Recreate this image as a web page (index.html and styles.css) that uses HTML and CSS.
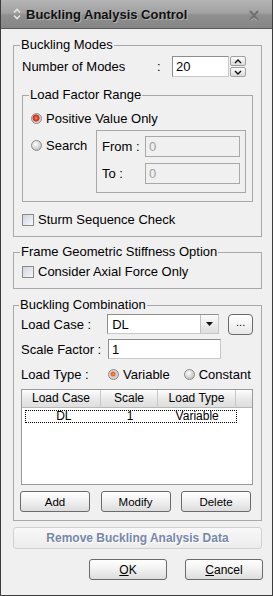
FILE: index.html
```html
<!DOCTYPE html>
<html lang="en">
<head>
  <meta charset="UTF-8" />
  <title>Buckling Analysis Control</title>
  <link rel="stylesheet" href="styles.css">
</head>
<body>
  <div class="window">
    <div class="titlebar">
      <svg class="title-icon" width="10" height="12" viewBox="0 0 10 12">
        <path d="M2 4.5 L5 1.5 L8 4.5 M2 7.5 L5 10.5 L8 7.5" fill="none" stroke="#e4e4e4" stroke-width="1.6"/>
      </svg>
      <span class="title-text">Buckling Analysis Control</span>
      <svg class="close-icon" width="12" height="11" viewBox="0 0 12 11">
        <path d="M2 1 L10 10 M10 1 L2 10" stroke="#707070" stroke-width="2"/>
        <path d="M3 10.5 L5 8.5 M9 10.5 L7 8.5" stroke="#c8c8c8" stroke-width="1"/>
      </svg>
    </div>

    <div class="content">
      <fieldset class="group group-modes">
        <legend>Buckling Modes</legend>
        <div class="row modes-row">
          <span class="label-modes">Number of Modes</span>
          <span class="colon">:</span>
          <input class="field field-modes" type="text" value="20">
          <div class="spinner">
            <div class="spin-btn">
              <svg width="8" height="5" viewBox="0 0 8 5"><path d="M1 4 L4 1 L7 4" fill="none" stroke="#111" stroke-width="1.4"/></svg>
            </div>
            <div class="spin-btn">
              <svg width="8" height="5" viewBox="0 0 8 5"><path d="M1 1 L4 4 L7 1" fill="none" stroke="#111" stroke-width="1.4"/></svg>
            </div>
          </div>
        </div>

        <fieldset class="group group-range">
          <legend>Load Factor Range</legend>
          <div class="radio-row positive-row">
            <span class="radio checked"></span>
            <span>Positive Value Only</span>
          </div>
          <div class="search-row">
            <div class="radio-row search-label">
              <span class="radio"></span>
              <span>Search</span>
            </div>
            <div class="range-box">
              <div class="range-line">
                <span class="range-label">From :</span>
                <input class="field field-range" type="text" value="0" disabled>
              </div>
              <div class="range-line">
                <span class="range-label">To :</span>
                <input class="field field-range" type="text" value="0" disabled>
              </div>
            </div>
          </div>
        </fieldset>

        <div class="check-row sturm-row">
          <span class="checkbox"></span>
          <span>Sturm Sequence Check</span>
        </div>
      </fieldset>

      <fieldset class="group group-frame">
        <legend>Frame Geometric Stiffness Option</legend>
        <div class="check-row axial-row">
          <span class="checkbox"></span>
          <span>Consider Axial Force Only</span>
        </div>
      </fieldset>

      <fieldset class="group group-combo">
        <legend>Buckling Combination</legend>
        <div class="row form-row">
          <span class="form-label">Load Case :</span>
          <div class="combo">
            <span class="combo-value">DL</span>
            <span class="combo-btn">
              <svg width="7" height="4" viewBox="0 0 7 4"><path d="M0 0 H7 L3.5 4 Z" fill="#111"/></svg>
            </span>
          </div>
          <button class="dots-btn">...</button>
        </div>
        <div class="row form-row scale-row">
          <span class="form-label">Scale Factor :</span>
          <input class="field field-scale" type="text" value="1">
        </div>
        <div class="row type-row">
          <span class="form-label">Load Type :</span>
          <div class="radio-row">
            <span class="radio checked small-dot"></span>
            <span>Variable</span>
          </div>
          <div class="radio-row constant">
            <span class="radio"></span>
            <span>Constant</span>
          </div>
        </div>

        <div class="list">
          <div class="list-head">
            <span class="col col-case">Load Case</span>
            <span class="col col-scale">Scale</span>
            <span class="col col-type">Load Type</span>
            <span class="col col-rest"></span>
          </div>
          <div class="list-row">
            <span class="col col-case">DL</span>
            <span class="col col-scale">1</span>
            <span class="col col-type">Variable</span>
          </div>
        </div>

        <div class="list-buttons">
          <button class="btn">Add</button>
          <button class="btn">Modify</button>
          <button class="btn">Delete</button>
        </div>
      </fieldset>

      <button class="remove-btn">Remove Buckling Analysis Data</button>

      <div class="dialog-buttons">
        <button class="btn btn-wide"><u>O</u>K</button>
        <button class="btn btn-wide"><u>C</u>ancel</button>
      </div>
    </div>
  </div>
</body>
</html>
```

FILE: styles.css
```css
* { box-sizing: border-box; }
body { margin: 0; padding: 0; background: #f0f0f0; font-family: "Liberation Sans", Arial, sans-serif; font-size: 13px; color: #000; }

.window { width: 273px; height: 596px; border: 1px solid #3c3c3c; border-top: none; background: #f0f0f0; overflow: hidden; }

.titlebar { height: 29px; display: flex; align-items: center; padding: 0 12px 0 11px; background: linear-gradient(#b4b4b4, #a2a2a2 45%, #8e8e8e 55%, #868686); border-bottom: 1px solid #5a5a5a; margin: 0 -1px; border-left: 1px solid #3c3c3c; border-right: 1px solid #3c3c3c; }
.title-icon { margin-right: 4px; }
.title-text { font-weight: bold; font-size: 13px; color: #111; text-shadow: 1px 1px 0 rgba(255,255,255,0.35); flex: 1; }
.close-icon { margin-top: 2px; }

.content { padding: 0 10px 0 12px; }

.group { margin: 0; border: 1px solid #a8a8a8; padding: 0 8px 0 8px; min-width: 0; }
.group legend { padding: 0 1px; margin-left: -2px; line-height: 14px; height: 14px; }

.row { display: flex; align-items: center; }

.field { font-family: "Liberation Sans", Arial, sans-serif; font-size: 13px; border: 1px solid #7f9db9; border-color: #8e8e8e #c8c8c8 #c8c8c8 #8e8e8e; background: #fff; padding: 0 3px; height: 21px; outline: none; color: #000; }
.field:disabled { background: #f0f0f0; color: #a0a0a0; border-color: #a8a8a8; }

/* Buckling Modes */
.group-modes { margin-top: 9px; padding-bottom: 10px; }
.modes-row { margin-top: 4px; height: 21px; }
.label-modes { width: 135px; }
.colon { width: 15px; }
.field-modes { width: 57px; }
.spinner { display: flex; flex-direction: column; gap: 1px; margin-left: 1px; }
.spin-btn { width: 16px; height: 10px; border: 1px solid #a0a0a0; border-radius: 2px; background: linear-gradient(#fbfbfb, #dcdcdc); display: flex; align-items: center; justify-content: center; }

.group-range { margin-top: 11px; padding: 0 6px 8px 8px; }
.group-range legend { margin-left: -2px; }
.radio-row { display: flex; align-items: center; gap: 4px; }
.positive-row { margin-top: 8px; height: 16px; }
.search-row { display: flex; margin-top: 4px; }
.search-label { width: 66px; height: 16px; margin-top: 7px; align-self: flex-start; }
.range-box { flex: 1; border: 1px solid #a8a8a8; padding: 5px 5px 8px 5px; display: flex; flex-direction: column; gap: 6px; }
.range-line { display: flex; align-items: center; }
.range-label { width: 43px; }
.field-range { width: 95px; }

.radio { width: 11px; height: 11px; border-radius: 50%; border: 1px solid #8a8a8a; background: radial-gradient(circle at 40% 35%, #ffffff, #cfcfcf 60%, #a8a8a8); display: inline-block; }
.radio.checked { background: radial-gradient(circle at 45% 45%, #ff9070 0, #e83a1c 30%, #c22a12 45%, #d8d8d8 55%, #bdbdbd); }
.radio.small-dot { background: radial-gradient(circle at 45% 45%, #ff9a60 0, #f05a1c 25%, #d8d8d8 45%, #bdbdbd); }

.check-row { display: flex; align-items: center; gap: 4px; height: 13px; }
.checkbox { width: 12px; height: 12px; border: 1px solid #8a8a8a; background: linear-gradient(135deg, #cfd4e0, #f8f8fb); display: inline-block; }
.sturm-row { margin-top: 11px; }

/* Frame */
.group-frame { margin-top: 8px; padding-bottom: 10px; }
.axial-row { margin-top: 6px; }

/* Combination */
.group-combo { margin-top: 9px; padding: 0 8px 8px 7px; }
.form-row { height: 20px; margin-top: 2px; }
.form-label { width: 87px; }
.combo { width: 113px; height: 20px; border: 1px solid #8e8e8e; border-color: #8e8e8e #c8c8c8 #c8c8c8 #8e8e8e; background: #fff; display: flex; align-items: center; }
.combo-value { flex: 1; padding-left: 4px; }
.combo-btn { width: 18px; height: 18px; border-left: 1px solid #c0c0c0; background: linear-gradient(#fafafa, #dedede); display: flex; align-items: center; justify-content: center; }
.dots-btn { margin-left: 9px; width: 25px; height: 21px; border: 1px solid #6a6a6a; border-radius: 4px; background: linear-gradient(#ffffff, #e8e8e8); font-family: "Liberation Sans", Arial, sans-serif; font-size: 11px; padding: 0 0 4px 0; line-height: 10px; }
.scale-row { margin-top: 5px; }
.field-scale { width: 113px; height: 20px; }
.type-row { margin-top: 8px; height: 14px; }
.constant { margin-left: 14px; }

.list { margin-top: 8px; height: 96px; border: 1px solid #9a9a9a; background: #fff; }
.list-head { display: flex; height: 18px; font-size: 12px; }
.list-head .col { background: linear-gradient(#fdfdfd, #e8e8e8 55%, #dedede); border-right: 1px solid #c8c8c8; border-bottom: 1px solid #b8b8b8; text-align: center; line-height: 17px; }
.col-case { width: 79px; }
.col-scale { width: 57px; }
.col-type { width: 78px; }
.col-rest { flex: 1; border-right: none !important; }
.list-row { display: flex; height: 13px; margin: 2px 0 0 3px; width: 212px; border: 1px dotted #000; font-size: 12px; line-height: 11px; }
.list-row .col { text-align: center; }
.list-row .col-case { width: 76px; }

.list-buttons { display: flex; justify-content: space-between; margin-top: 6px; padding: 0 2px 0 0; margin-left: -1px; }
.btn { width: 70px; height: 21px; border: 1px solid #6a6a6a; border-radius: 3px; background: linear-gradient(#ffffff, #f0f0f0 50%, #dcdcdc); font-family: "Liberation Sans", Arial, sans-serif; font-size: 11.5px; color: #000; padding: 0; }

.remove-btn { display: block; width: 249px; height: 22px; margin-top: 6px; border: 1px solid #d0d0d0; border-radius: 3px; background: linear-gradient(#f8f8f8, #ececec); color: #7688aa; font-weight: bold; font-family: "Liberation Sans", Arial, sans-serif; font-size: 12px; text-shadow: 1px 1px 0 #fff; padding: 0; }

.dialog-buttons { display: flex; justify-content: flex-end; gap: 18px; margin-top: 10px; margin-right: -1px; }
.btn-wide { width: 78px; height: 21px; font-size: 12px; }
```
